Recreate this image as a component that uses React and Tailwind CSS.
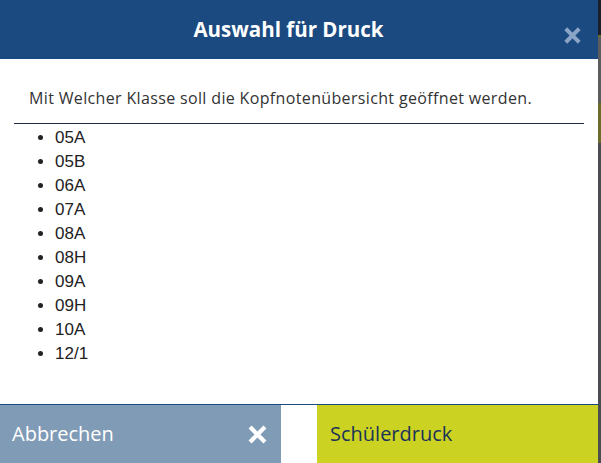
const klassen = ['05A', '05B', '06A', '07A', '08A', '08H', '09A', '09H', '10A', '12/1'];

const CloseIcon = ({ className, width = 3.2 }) => (
    <svg viewBox="0 0 16 16" className={className} fill="none" stroke="currentColor" strokeWidth={width} strokeLinecap="square">
        <path d="M3 3 L13 13 M13 3 L3 13" />
    </svg>
);

export default function App() {
    return (
        <div className="flex w-[601px] h-[463px] overflow-hidden bg-white" style={{ fontFamily: '"Open Sans", "Noto Sans", sans-serif' }}>
            <div className="flex flex-col w-[598px] h-full">
                {/* header */}
                <div className="relative flex items-center justify-center h-[59px] pr-[21px] bg-[#1b4a80]">
                    <h1 className="text-[20.5px] font-bold text-white">Auswahl für Druck</h1>
                    <CloseIcon width={3.8} className="absolute right-[17px] top-[27px] w-[17px] h-[17px] text-[#8ba5c7]" />
                </div>

                {/* body */}
                <div className="flex-1 px-[14px]">
                    <p className="pl-[15px] pt-[29px] pb-[14px] text-[16px] leading-[21px] text-[#333] tracking-[0.35px]">
                        Mit Welcher Klasse soll die Kopfnotenübersicht geöffnet werden.
                    </p>
                    <div className="border-t border-[#1c2f47]" />
                    <ul className="pt-[2px] pl-[41px] list-disc text-[17px] leading-[24px] text-[#222]" style={{ fontFamily: '"Liberation Sans", Arial, sans-serif' }}>
                        {klassen.map(k => (
                            <li key={k}>{k}</li>
                        ))}
                    </ul>
                </div>

                {/* footer */}
                <div className="flex h-[59px] border-t border-[#1b4a80]">
                    <button className="flex items-center justify-between w-[281px] h-full pl-[12px] pr-[14px] bg-[#7f9bb5] text-white text-[20px]">
                        <span>Abbrechen</span>
                        <CloseIcon width={3.6} className="w-[19px] h-[19px] text-white" />
                    </button>
                    <div className="w-[36px] bg-white" />
                    <button className="flex items-center flex-1 h-full pl-[13px] bg-[#cbd221] text-[#1b3358] text-[20px]">
                        Schülerdruck
                    </button>
                </div>
            </div>
            <div className="flex flex-col w-[3px] h-full">
                <div className="h-[35px] bg-[#1a1f2a]" />
                <div className="h-[2px] bg-[#6b6b2a]" />
                <div className="h-[66px] bg-[#5c5c5c]" />
                <div className="h-[40px] bg-[#6b6b2a]" />
                <div className="flex-1 bg-[#4a4c52]" />
            </div>
        </div>
    );
}
